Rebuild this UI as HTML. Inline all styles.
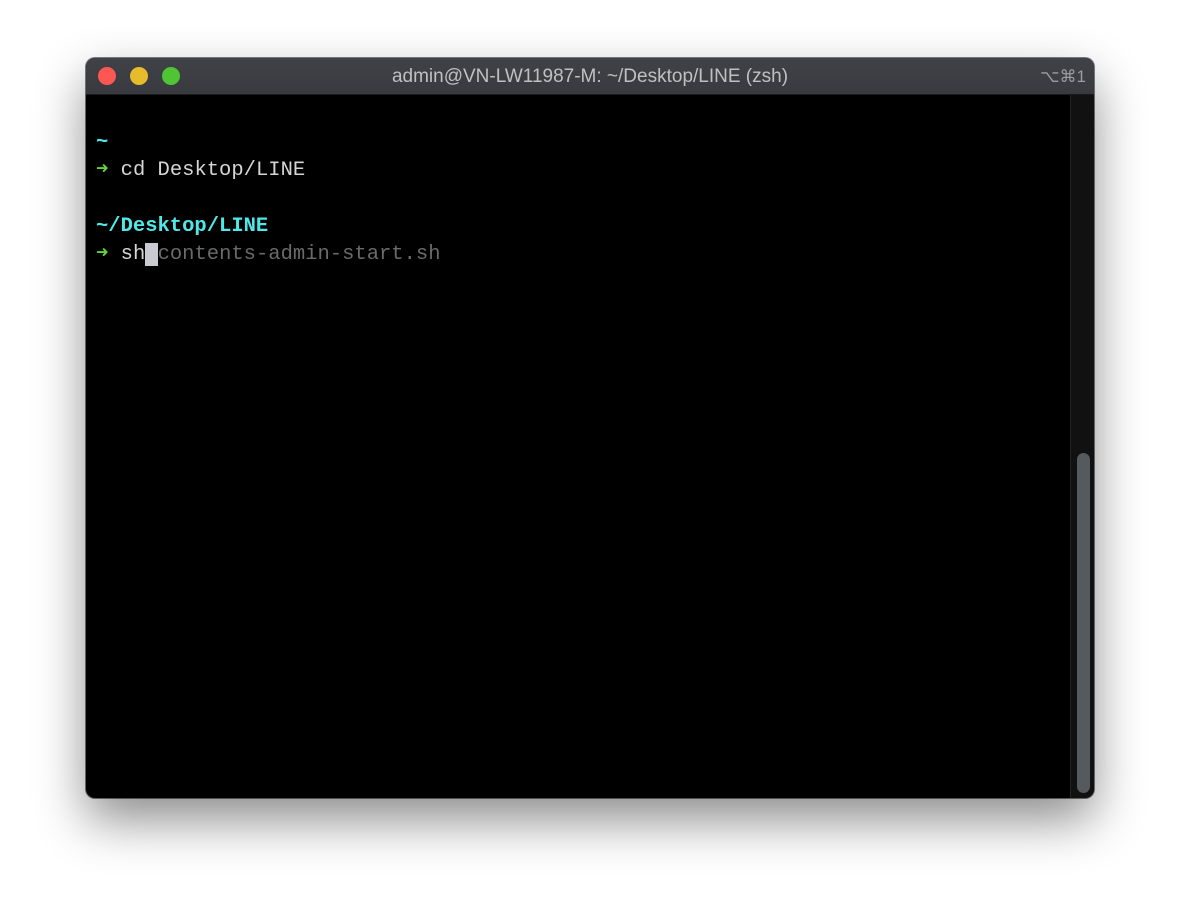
<!DOCTYPE html>
<html><head><meta charset="utf-8"><style>
html,body{margin:0;padding:0;background:#fff;width:1180px;height:912px;overflow:hidden}
.win{position:absolute;left:86px;top:58px;width:1008px;height:740px;border-radius:9px;background:#000;overflow:hidden;
box-shadow:0 22px 50px rgba(0,0,0,.45),0 0 0 1px rgba(0,0,0,.5)}
.title{position:absolute;left:0;top:0;width:1008px;height:36px;background:linear-gradient(#404248,#383a3f);border-bottom:1px solid #1a1a1a;
font-family:"Liberation Sans",sans-serif;font-size:19px;color:#bfc0c2;text-align:center;line-height:37px}
.dot{position:absolute;top:9px;width:18px;height:18px;border-radius:50%}
.kb{position:absolute;right:8px;top:0;color:#9a9ca0;font-size:17px}
.sb{position:absolute;left:984px;top:37px;width:24px;height:703px;background:#111;border-left:1px solid #242424}
.thumb{position:absolute;left:6px;top:358px;width:13px;height:340px;border-radius:7px;background:#555a5e}
.term{position:absolute;left:10px;top:71px;font-family:"Liberation Mono",monospace;font-size:20.5px;line-height:28px;color:#d6d6d6;white-space:pre}
.c{color:#4fe8e8;font-weight:bold}
.g{color:#5fd43b}
.cur{background:#c8ccd2;color:#000}
.gr{color:#6a6a6a}
</style></head><body>
<div class="win">
<div class="title">admin@VN-LW11987-M: ~/Desktop/LINE (zsh)
<div class="dot" style="left:12px;background:#fc5753"></div>
<div class="dot" style="left:44px;background:#e6bb2c"></div>
<div class="dot" style="left:76px;background:#4fc435"></div>
<span class="kb">⌥⌘1</span></div>
<div class="term"><span class="c">~</span>
<span class="g">➜</span> cd Desktop/LINE

<span class="c">~/Desktop/LINE</span>
<span class="g">➜</span> sh<span class="cur"> </span><span class="gr">contents-admin-start.sh</span></div>
<div class="sb"><div class="thumb"></div></div>
</div>
</body></html>
